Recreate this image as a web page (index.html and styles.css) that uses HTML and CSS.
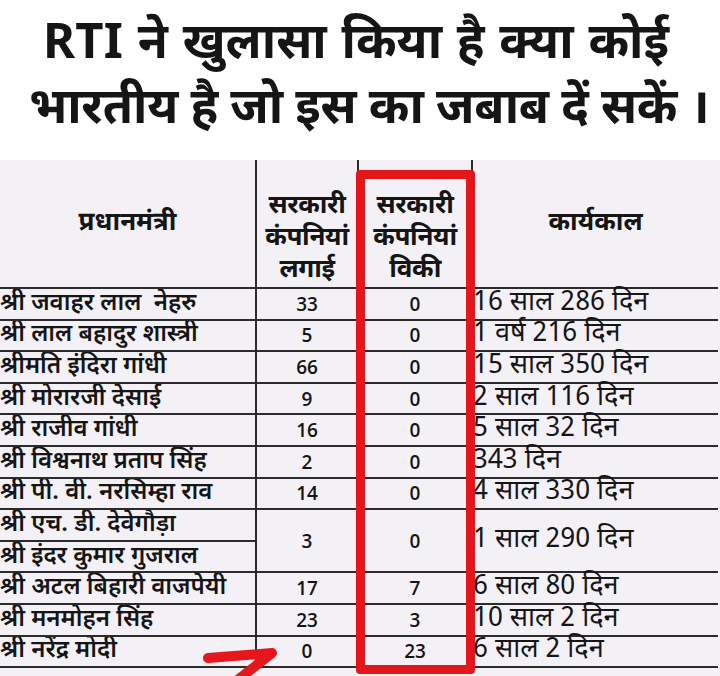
FILE: index.html
```html
<!DOCTYPE html>
<html lang="hi">
<head>
<meta charset="utf-8">
<link rel="stylesheet" href="styles.css">
</head>
<body>
<div class="page">
  <h1 class="title">
    <span class="line first">RTI ने खुलासा किया है क्या कोई</span>
    <span class="line second">भारतीय है जो इस का जबाब दें सकें ।</span>
  </h1>
  <div class="sheet">
    <table class="grid">
      <colgroup>
        <col class="c1"><col class="c2"><col class="c3"><col class="c4">
      </colgroup>
      <thead>
        <tr class="head">
          <th class="h-name">प्रधानमंत्री</th>
          <th class="h-num">सरकारी<br>कंपनियां<br>लगाई</th>
          <th class="h-num">सरकारी<br>कंपनियां<br>विकी</th>
          <th class="h-term">कार्यकाल</th>
        </tr>
      </thead>
      <tbody>
        <tr><td class="name">श्री जवाहर लाल&nbsp; नेहरु</td><td class="num">33</td><td class="num">0</td><td class="term">16 साल 286 दिन</td></tr>
        <tr><td class="name">श्री लाल बहादुर शास्त्री</td><td class="num">5</td><td class="num">0</td><td class="term">1 वर्ष 216 दिन</td></tr>
        <tr><td class="name">श्रीमति इंदिरा गांधी</td><td class="num">66</td><td class="num">0</td><td class="term">15 साल 350 दिन</td></tr>
        <tr><td class="name">श्री मोरारजी देसाई</td><td class="num">9</td><td class="num">0</td><td class="term">2 साल 116 दिन</td></tr>
        <tr><td class="name">श्री राजीव गांधी</td><td class="num">16</td><td class="num">0</td><td class="term">5 साल 32 दिन</td></tr>
        <tr><td class="name">श्री विश्वनाथ प्रताप सिंह</td><td class="num">2</td><td class="num">0</td><td class="term">343 दिन</td></tr>
        <tr><td class="name">श्री पी. वी. नरसिम्हा राव</td><td class="num">14</td><td class="num">0</td><td class="term">4 साल 330 दिन</td></tr>
        <tr><td class="name">श्री एच. डी. देवेगौड़ा</td><td class="num" rowspan="2">3</td><td class="num" rowspan="2">0</td><td class="term" rowspan="2">1 साल 290 दिन</td></tr>
        <tr><td class="name">श्री इंदर कुमार गुजराल</td></tr>
        <tr><td class="name">श्री अटल बिहारी वाजपेयी</td><td class="num">17</td><td class="num">7</td><td class="term">6 साल 80 दिन</td></tr>
        <tr><td class="name">श्री मनमोहन सिंह</td><td class="num">23</td><td class="num">3</td><td class="term">10 साल 2 दिन</td></tr>
        <tr><td class="name">श्री नरेंद्र मोदी</td><td class="num">0</td><td class="num">23</td><td class="term">6 साल 2 दिन</td></tr>
      </tbody>
    </table>
    <div class="highlight"></div>
    <svg class="arrow" width="90" height="40" viewBox="0 0 90 40">
      <path d="M8 12 L72 7 M72 7 L30 40" fill="none" stroke="#e5161c" stroke-width="10" stroke-linecap="round" stroke-linejoin="round"/>
    </svg>
  </div>
</div>
</body>
</html>
```

FILE: styles.css
```css
html, body {
  margin: 0;
  padding: 0;
  background: #ffffff;
}
.page {
  width: 720px;
  height: 676px;
  overflow: hidden;
  font-family: "Noto Sans Devanagari", "Lohit Devanagari", "Noto Sans", "Liberation Sans", sans-serif;
  color: #151515;
}
.title {
  margin: 0;
  padding: 14px 0 0;
  height: 146px;
  box-sizing: border-box;
  text-align: center;
  font-size: 49px;
  font-weight: 700;
  line-height: 65px;
}
.line {
  display: block;
}
.first {
  word-spacing: 2px;
  padding-right: 8px;
}
.second {
  padding-left: 18px;
  letter-spacing: -0.3px;
}
.sheet {
  position: relative;
  margin-top: 14px;
  background: #f4f1f6;
  height: 516px;
}
.grid {
  border-collapse: collapse;
  table-layout: fixed;
  width: 718px;
}
.c1 { width: 256px; }
.c2 { width: 102px; }
.c3 { width: 114px; }
.c4 { width: 246px; }
.grid th,
.grid td {
  padding: 0;
  border: 2px solid #2b2b2b;
}
.grid tr > :first-child { border-left: 0; }
.grid tr > :last-child { border-right: 0; }
.head th {
  border-top: 0;
  height: 127px;
  font-weight: 700;
}
.h-name {
  font-size: 26px;
  text-align: center;
}
.h-num {
  font-size: 26px;
  line-height: 32px;
  text-align: center;
  vertical-align: bottom;
  padding-bottom: 3px;
  letter-spacing: -0.5px;
}
.h-term {
  font-size: 26px;
  text-align: center;
}
tbody tr {
  height: 31.6px;
}
.name {
  font-size: 24px;
  font-weight: 600;
  text-align: left;
  padding-left: 2px;
  padding-top: 3px;
  line-height: 26px;
  white-space: nowrap;
  overflow: hidden;
}
.num {
  font-family: "Open Sans", "Liberation Sans", sans-serif;
  font-size: 19px;
  font-weight: 600;
  text-align: center;
  line-height: 26px;
  padding-top: 4px;
}
.term {
  font-size: 27px;
  padding-left: 3px;
  padding-top: 3px;
  line-height: 26px;
  white-space: nowrap;
}
.highlight {
  position: absolute;
  left: 356px;
  top: 10px;
  width: 119px;
  height: 504px;
  box-sizing: border-box;
  border: 9px solid #e3161b;
  border-radius: 4px;
}
.arrow {
  position: absolute;
  left: 200px;
  top: 486px;
}
```
